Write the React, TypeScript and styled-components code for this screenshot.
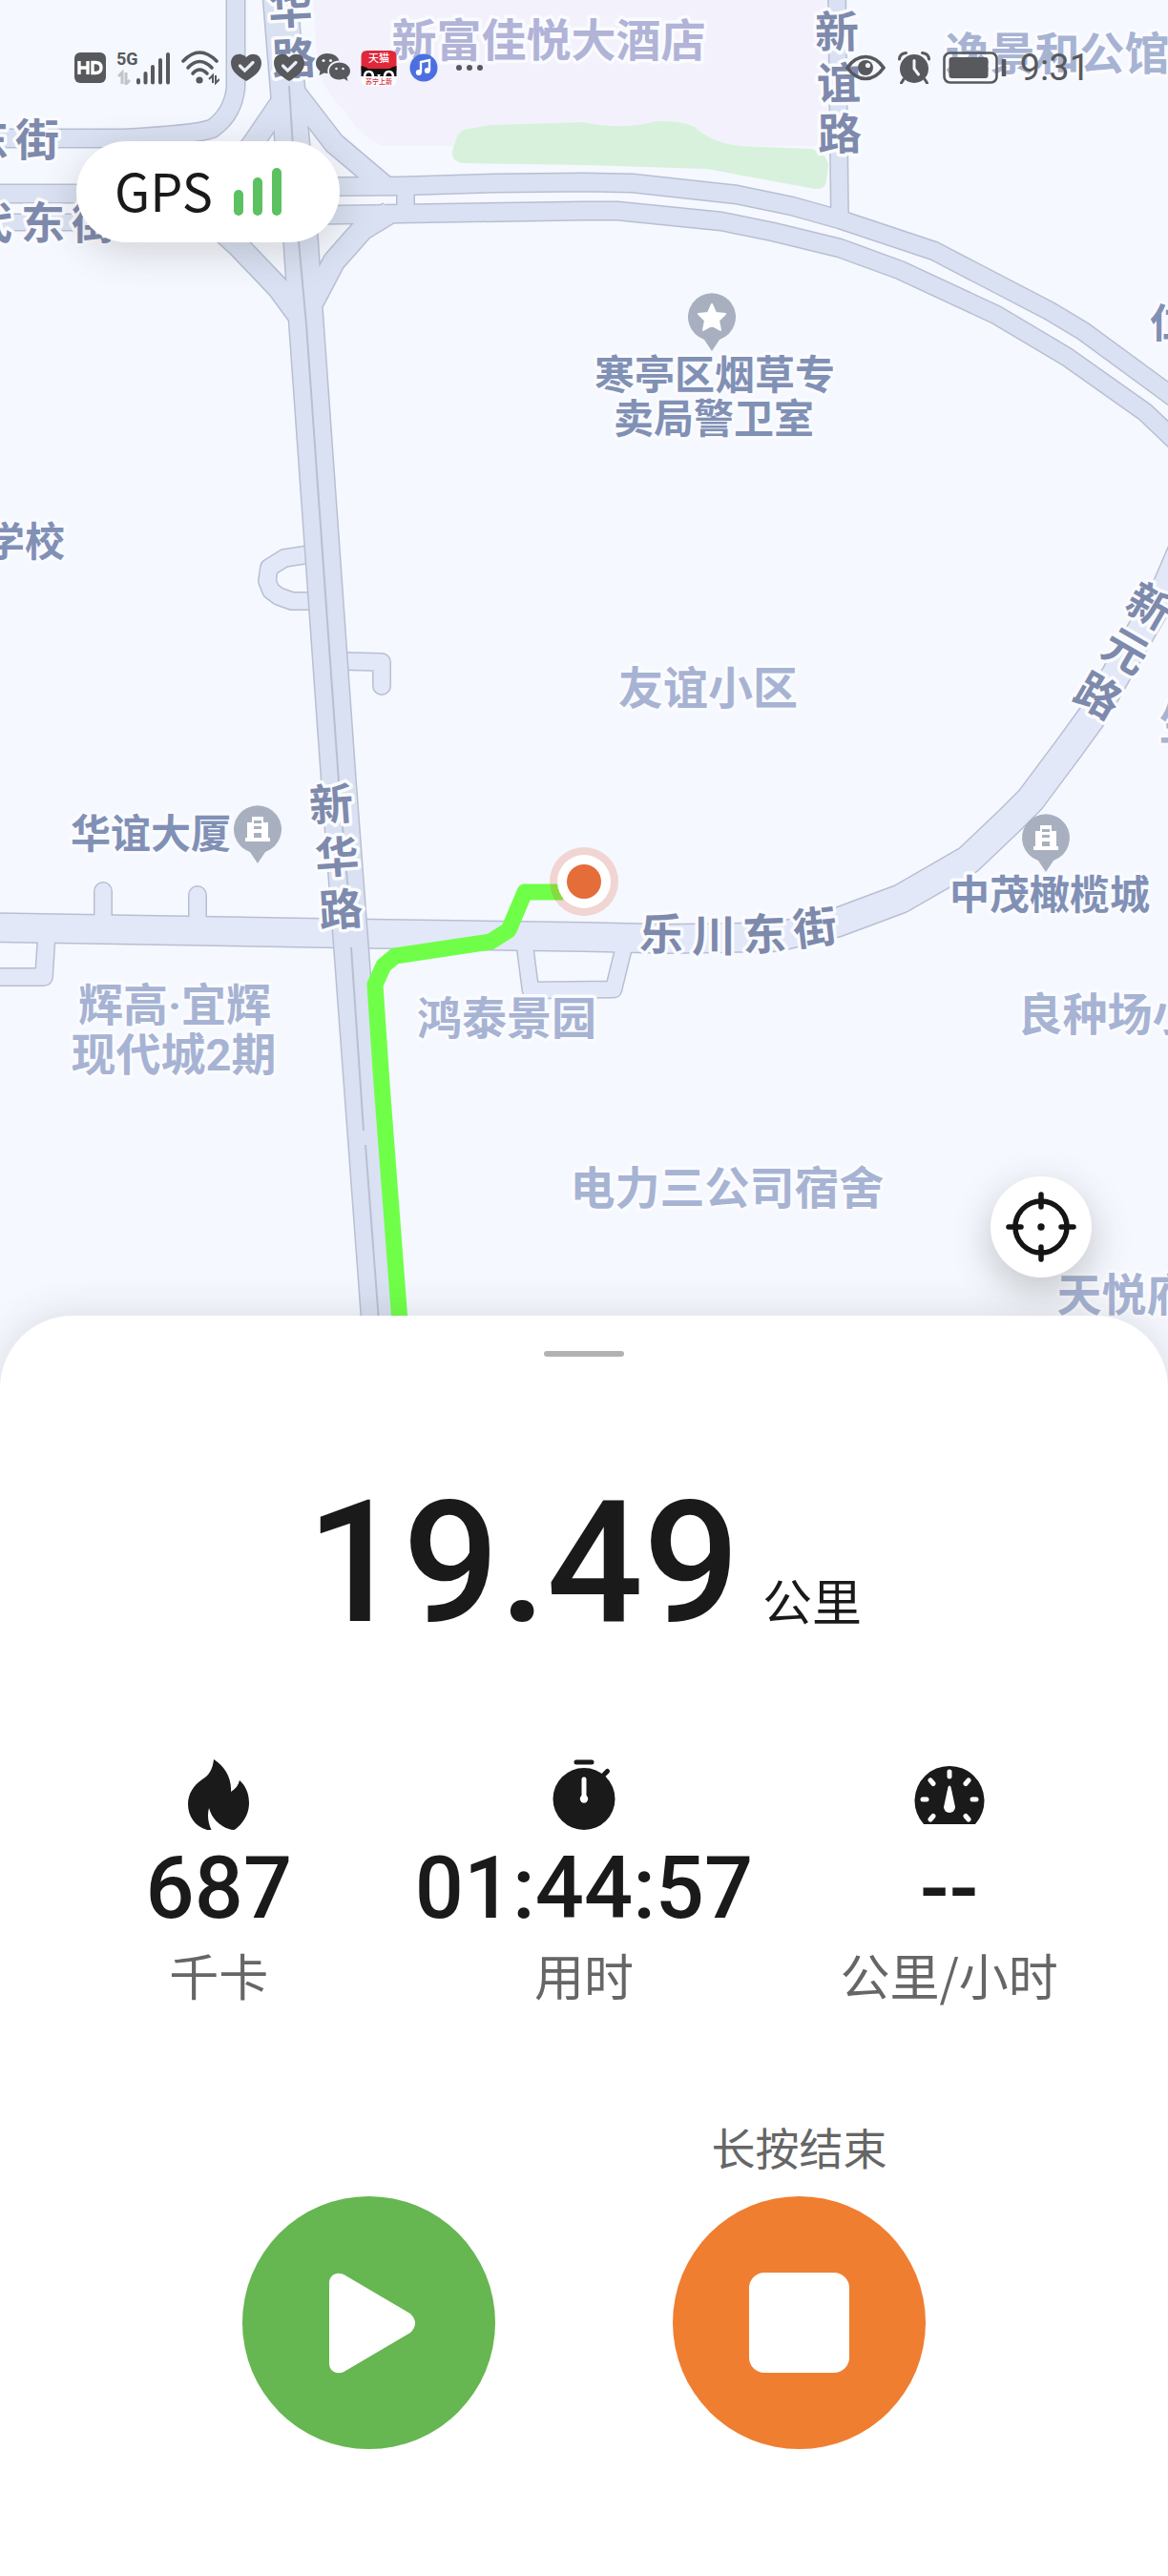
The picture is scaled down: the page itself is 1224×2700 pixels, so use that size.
import React from "react";
import styled, { createGlobalStyle } from "styled-components";

const GlobalStyle = createGlobalStyle`
  *, *::before, *::after { box-sizing: border-box; }
  body { margin: 0; background: #fff; }
  button { border: 0; padding: 0; cursor: pointer; font: inherit; }
`;

const cjk = `"Noto Sans CJK SC", "Noto Sans", sans-serif`;
const digits = `Roboto, "Noto Sans", sans-serif`;

const Screen = styled.main`
  min-height: 100vh;
  display: flex;
  flex-direction: column;
  font-family: ${cjk};
  color: #1a1a1a;
  overflow: hidden;
`;

const MapPane = styled.section`
  position: relative;
`;

const MapCanvas = styled.svg`
  display: block;
  width: 100%;
  height: 1460px;
  background: #f5f8fe;
  font-family: Roboto, ${cjk};
`;

const StatusBar = styled.header`
  position: absolute;
  top: 50px;
  left: 78px;
  right: 82px;
  height: 42px;
  display: flex;
  align-items: center;
  justify-content: space-between;
  color: #58595d;
`;

const StatusGroup = styled.div<{ $gap: number }>`
  display: flex;
  align-items: center;
  gap: ${(p) => p.$gap}px;
`;

const Clock = styled.time`
  font-family: Roboto, ${cjk};
  font-size: 38px;
  line-height: 42px;
`;

const GpsPill = styled.div`
  position: absolute;
  top: 148px;
  left: 80px;
  height: 106px;
  padding: 0 61px 0 40px;
  display: flex;
  align-items: center;
  gap: 22px;
  border-radius: 53px;
  background: #fff;
  box-shadow: 0 10px 40px rgba(60, 60, 60, 0.2);
  font-size: 54px;
  line-height: 60px;
`;

const GpsName = styled.span`
  padding-bottom: 4px;
`;

const LocateButton = styled.button`
  position: absolute;
  right: 80px;
  bottom: 121px;
  width: 106px;
  height: 106px;
  display: grid;
  place-items: center;
  border-radius: 50%;
  background: #fff;
  color: #151515;
  box-shadow: 0 14px 40px rgba(60, 60, 60, 0.28);
`;

const Sheet = styled.section`
  position: relative;
  flex: 1;
  margin-top: -81px;
  padding: 37px 38px 133px;
  display: flex;
  flex-direction: column;
  align-items: center;
  border-radius: 76px 76px 0 0;
  background: #fff;
  box-shadow: 0 0 40px rgba(60, 60, 60, 0.16);
`;

const Handle = styled.div`
  width: 84px;
  height: 6px;
  border-radius: 3px;
  background: #b2b2b2;
`;

const Distance = styled.p`
  margin: 128px 0 0;
  display: flex;
  align-items: baseline;
  gap: 24px;
  font-size: 52px;
  line-height: 60px;
`;

const DistanceValue = styled.strong`
  font-family: ${digits};
  font-size: 178px;
  font-weight: 500;
  line-height: 176px;
`;

const Stats = styled.dl`
  width: 100%;
  margin: 118px 0 0;
  display: grid;
  grid-template-columns: repeat(3, 1fr);
`;

const Stat = styled.div`
  display: flex;
  flex-direction: column;
  align-items: center;
`;

const StatValue = styled.dd`
  order: 1;
  margin: 18px 0 16px;
  font-family: ${digits};
  font-size: 90px;
  font-weight: 500;
  line-height: 88px;
`;

const StatLabel = styled.dt`
  order: 2;
  color: #666;
  font-size: 52px;
  line-height: 60px;
  white-space: nowrap;
`;

const Controls = styled.div`
  margin-top: 122px;
  display: flex;
  align-items: flex-end;
  justify-content: center;
  gap: 186px;
`;

const Control = styled.div`
  display: flex;
  flex-direction: column;
  align-items: center;
  gap: 26px;
`;

const Hint = styled.label`
  color: #666;
  font-size: 46px;
  line-height: 54px;
`;

const RoundButton = styled.button<{ $tone: string }>`
  width: 265px;
  height: 265px;
  display: grid;
  place-items: center;
  border-radius: 50%;
  background: ${(p) => p.$tone};
  color: #fff;
`;

const StopMark = styled.span`
  width: 105px;
  height: 105px;
  border-radius: 16px;
  background: currentColor;
`;

/* ---------- map ---------- */

type Road = { d: string; w: number; cap?: "round" | "butt" };

const MINOR = "#e2e8f8";
const MAJOR = "#d9e1f2";
const EDGE = "#b9bfd2";

const minorRoads: Road[] = [
  { d: "M324 581L298 585L282 595L280 609L284 619L292 625L306 630L328 630", w: 17 },
  { d: "M360 693L400 694L400 719", w: 17, cap: "round" },
  { d: "M108 975L108 934", w: 17, cap: "round" },
  { d: "M207 975L207 938", w: 17, cap: "round" },
  { d: "M49 978L46 1024L-10 1024", w: 17 },
  { d: "M549 984L556 1038L643 1037L656 984", w: 16 },
  {
    d: "M-10 972L340 978L612 982L700 984L815 982L877 967L944 942L1015 901L1058 860L1080 838L1121 783L1145 750L1185 680L1222 617L1240 575",
    w: 29,
  },
];

const majorRoads: Road[] = [
  { d: "M247 -10L247 92Q244 120 222 135Q205 141 130 145L-10 145", w: 18 },
  { d: "M877 -10L880 228", w: 17 },
  { d: "M-10 203L120 203L340 195", w: 18 },
  { d: "M-10 233L120 233L340 226", w: 16 },
  { d: "M305 92L264 152L230 195", w: 21 },
  { d: "M310 98L350 150L402 194", w: 21 },
  { d: "M215 226L250 258L292 302L314 332", w: 22 },
  { d: "M408 223L380 240L350 274L328 316", w: 22 },
  { d: "M425 190L425 224", w: 17 },
  { d: "M293 -10L302 100L315 250L321 340L355 820L368 993L397 1385", w: 35 },
  {
    d: "M300 196L420 195L520 192L612 191L663 192L772 204L830 216L880 230L979 263L1100 326L1135 347L1240 424",
    w: 18,
  },
  {
    d: "M300 226L420 224L612 221L647 221L756 232L810 243L880 260L943 283L1044 330L1118 374L1200 432L1240 470",
    w: 18,
  },
];

const Roads = ({ roads, fill }: { roads: Road[]; fill: string }) => (
  <g fill="none" strokeLinejoin="round">
    {roads.map((r) => (
      <path key={`edge${r.d}`} d={r.d} stroke={EDGE} strokeWidth={r.w + 3} strokeLinecap={r.cap} />
    ))}
    {roads.map((r) => (
      <path key={r.d} d={r.d} stroke={fill} strokeWidth={r.w} strokeLinecap={r.cap} />
    ))}
  </g>
);

const MapText = styled.text<{ $size: number; $fill: string }>`
  font-size: ${(p) => p.$size}px;
  font-weight: 700;
  fill: ${(p) => p.$fill};
  stroke: #fafbff;
  stroke-width: 7px;
  stroke-linejoin: round;
  paint-order: stroke;
`;

const AREA = "#a7b3d3";
const PLACE = "#8190b5";
const STREET = "#7e8aac";

const areaLabels: [string, number, number, string?][] = [
  ["新富佳悦大酒店", 575, 41, "#b1b3d7"],
  ["逸景和公馆", 1108, 55],
  ["友谊小区", 742, 720],
  ["辉高·宜辉", 183, 1052],
  ["现代城2期", 182, 1104],
  ["鸿泰景园", 531, 1066],
  ["良种场小区", 1184, 1062],
  ["电力三公司宿舍", 762, 1244],
  ["天悦府", 1178, 1356],
  ["生", 1238, 757],
];

const placeLabels: [string, number, number][] = [
  ["寒亭区烟草专", 749, 392],
  ["卖局警卫室", 748, 438],
  ["学校", 26, 567],
  ["华谊大厦", 158, 873],
  ["中茂橄榄城", 1100, 937],
  ["仁", 1226, 338],
];

const streetGlyphs: [string, number, number, number][] = [
  ["华", 304, 8, -3], ["路", 308, 61, -3],
  ["东", -14, 146, 0], ["街", 39, 146, 0],
  ["代", -10, 233, 0], ["东", 45, 233, 0], ["街", 98, 233, 0],
  ["新", 877, 33, -1], ["谊", 879, 87, -1], ["路", 880, 140, -1],
  ["新", 347, 843, -4], ["华", 353, 898, -4], ["路", 357, 953, -4],
  ["新", 1205, 635, 30], ["元", 1180, 682, 30], ["路", 1151, 729, 30],
  ["乐", 693, 979, 1], ["川", 748, 980, 0], ["东", 801, 979, -2], ["街", 854, 972, -7],
];

const Pin = ({ x, y, kind }: { x: number; y: number; kind: "star" | "building" }) => (
  <g transform={`translate(${x} ${y})`}>
    <path d="M0 35L-8 23A25 25 0 1 1 8 23Z" fill="#a8b0c0" />
    {kind === "star" ? (
      <path
        d="M0 -14L4 -5L14 -4L7 3L9 13L0 8L-9 13L-7 3L-14 -4L-4 -5Z"
        fill="#fff" stroke="#fff" strokeWidth="2" strokeLinejoin="round"
      />
    ) : (
      <path
        fillRule="evenodd" fill="#fff"
        d="M-6 -14H6V-8H11V8H13V12H-13V8H-11V-8H-6ZM-4 -10V-7H4V-10ZM-4 -4V-1H4V-4ZM-4 3V8H4V3Z"
      />
    )}
  </g>
);

const CityMap = () => (
  <MapCanvas viewBox="0 0 1224 1460" preserveAspectRatio="xMidYMin slice" role="img" aria-label="运动轨迹地图">
    <path d="M328 0L333 70Q340 97 360 115Q385 153 406 153H868V0Z" fill="#f3f2fc" />
    <path
      d="M484 171Q472 168 474 158L479 143Q482 137 490 135L515 131L612 128Q650 137 688 127Q715 126 728 133Q745 150 776 153L850 156Q868 162 868 174L866 190Q864 199 854 198L741 177L612 173Z"
      fill="#d8f1dc"
    />
    <Roads roads={minorRoads} fill={MINOR} />
    <Roads roads={majorRoads} fill={MAJOR} />
    <path
      d="M303 90L313 253L321 340L355 820L368 970M368 993L381 1185M383 1200L397 1385"
      fill="none" stroke={EDGE} strokeWidth="2"
    />
    {streetGlyphs.map(([t, x, y, r]) => (
      <MapText
        key={`${t}${x}${y}`} $size={46} $fill={STREET} textAnchor="middle"
        transform={`translate(${x} ${y}) rotate(${r})`} y={17}
      >
        {t}
      </MapText>
    ))}
    {areaLabels.map(([t, x, y, c]) => (
      <MapText key={t} $size={47} $fill={c ?? AREA} textAnchor="middle" x={x} y={y + 18}>
        {t}
      </MapText>
    ))}
    {placeLabels.map(([t, x, y]) => (
      <MapText key={t} $size={42} $fill={PLACE} textAnchor="middle" x={x} y={y + 16}>
        {t}
      </MapText>
    ))}
    <Pin x={746} y={333} kind="star" />
    <Pin x={270} y={870} kind="building" />
    <Pin x={1096} y={879} kind="building" />
    <path
      d="M590 935L550 935L533 975L514 987L414 1002L402 1012L393 1032L400 1136L419 1385"
      fill="none" stroke="#70ff48" strokeWidth="17" strokeLinejoin="round"
    />
    <circle cx="612" cy="924" r="36" fill="#dd4a22" fillOpacity="0.2" />
    <circle cx="612" cy="924" r="28" fill="#fff" />
    <circle cx="612" cy="924" r="18" fill="#e56d39" />
  </MapCanvas>
);

/* ---------- status icons ---------- */

const HdIcon = () => (
  <svg width="34" height="34" viewBox="0 0 34 34" aria-hidden="true">
    <rect y="1" width="33" height="32" rx="6" fill="currentColor" />
    <path d="M5 10V24M14 10V24M5 17H14M19 11.500V22.500H22Q28 22.500 28 17T22 11.500Z" fill="none" stroke="#fff" strokeWidth="3.400" />
  </svg>
);

const SignalText = styled.text`
  font: 700 18px Roboto, sans-serif;
  fill: currentColor;
`;

const SignalIcon = () => (
  <svg width="56" height="36" viewBox="0 0 56 36" aria-hidden="true">
    <SignalText x="-1" y="15">5G</SignalText>
    <path d="M1 27L5 23V35M9 23V35L13 31" fill="none" stroke="#c3c4c8" strokeWidth="3" />
    <path d="M22 33.500V31M29.500 33.500V24M37 33.500V17M45 33.500V10M53 33.500V4" stroke="currentColor" strokeWidth="4" strokeLinecap="round" />
  </svg>
);

const WifiIcon = () => (
  <svg width="40" height="36" viewBox="0 0 40 36" aria-hidden="true">
    <g fill="none" stroke="currentColor" strokeWidth="3.600" strokeLinecap="round">
      <path d="M2 11Q19 -7 37 11" />
      <path d="M7 18Q19 5 32 18" />
      <path d="M12 24Q19 16 27 24" />
    </g>
    <circle cx="19" cy="31" r="3.600" fill="currentColor" />
    <path d="M29 30L33 26V34M36 26V34L40 30" fill="none" stroke="currentColor" strokeWidth="2" />
  </svg>
);

const HeartIcon = () => (
  <svg width="34" height="30" viewBox="0 0 34 30" aria-hidden="true">
    <path
      fillRule="evenodd" fill="currentColor"
      d="M17 4C22 -2 33 0 33 10C33 19 24 25 17 29C10 25 1 19 1 10C1 0 12 -2 17 4Z"
    />
    <path d="M10.500 13L15.500 18L24 9.500" fill="none" stroke="#e8ecf6" strokeWidth="3.200" strokeLinecap="round" />
  </svg>
);

const WeChatIcon = () => (
  <svg width="36" height="30" viewBox="0 0 36 30" aria-hidden="true">
    <path d="M12 0C5 0 0 4.500 0 10.500C0 14 2 16.500 4.500 18.500L3.500 23L8.500 20.500L12.500 21C11 13 17 7.500 24.500 7.500C23 3 18.500 0 12 0Z" fill="currentColor" />
    <path d="M24.500 9.500C18.500 9.500 14 13.500 14 18.500C14 24 19 28 25 27.500C27 27.500 28 27 29.500 26.600L33.500 29L32.500 25C34.500 23.500 36 21.500 36 18.500C36 13.500 31 9.500 24.500 9.500Z" fill="currentColor" />
    <g fill="#eef1fa">
      <circle cx="8" cy="7.500" r="1.600" /><circle cx="15.500" cy="7.500" r="1.600" />
      <circle cx="21.500" cy="16" r="1.300" /><circle cx="28.500" cy="16" r="1.300" />
    </g>
  </svg>
);

const ShopText = styled.text<{ $fill: string; $size: number }>`
  font: 500 ${(p) => p.$size}px ${cjk};
  fill: ${(p) => p.$fill};
`;

const ShopIcon = () => (
  <svg width="38" height="38" viewBox="0 0 38 38" aria-hidden="true">
    <rect x="0.500" y="1" width="37" height="37" rx="6" fill="#fff" />
    <path d="M0.500 22V7Q0.500 1 6.500 1H31.500Q37.500 1 37.500 7V22Z" fill="#e0283a" />
    <path d="M0.500 17Q5 18 8 20H30Q33 18 37.500 17V28H0.500Z" fill="#111" />
    <path d="M4 29Q4 23 8.500 23T13 29M25 29Q25 23 29.500 23T34 29" fill="none" stroke="#fff" strokeWidth="2.600" />
    <path d="M17 26H21L19 29Z" fill="#fff" />
    <ShopText $fill="#fff" $size={11} x="8" y="13">天猫</ShopText>
    <ShopText $fill="#d5283a" $size={7} x="5" y="36">苏宁上新</ShopText>
  </svg>
);

const MusicIcon = () => (
  <svg width="32" height="32" viewBox="-2 -1 32 32" aria-hidden="true">
    <circle cx="15" cy="15" r="14.500" fill="#4c6fe0" />
    <path d="M12 20V9L21 7V18" fill="none" stroke="#fff" strokeWidth="2.400" />
    <circle cx="9.800" cy="20" r="3" fill="#fff" /><circle cx="18.800" cy="18" r="3" fill="#fff" />
  </svg>
);

const DotsIcon = () => (
  <svg width="36" height="8" viewBox="-8 0 36 8" aria-hidden="true">
    <g fill="currentColor"><circle cx="3" cy="4" r="3" /><circle cx="14" cy="4" r="3" /><circle cx="25" cy="4" r="3" /></g>
  </svg>
);

const EyeIcon = () => (
  <svg width="42" height="28" viewBox="0 0 42 28" aria-hidden="true">
    <path d="M2 14Q10 2.500 21 2.500T40 14Q32 25.500 21 25.500T2 14Z" fill="none" stroke="currentColor" strokeWidth="3.600" />
    <circle cx="21" cy="14" r="8" fill="currentColor" />
    <circle cx="23.500" cy="11.500" r="2.600" fill="#eef1fa" />
  </svg>
);

const AlarmIcon = () => (
  <svg width="34" height="34" viewBox="0 0 34 34" aria-hidden="true">
    <circle cx="17" cy="18" r="15" fill="currentColor" />
    <path d="M1.500 8Q2 2 8.500 1.500M32.500 8Q32 2 25.500 1.500M6 29L3.500 33M28 29L30.500 33" fill="none" stroke="currentColor" strokeWidth="3" strokeLinecap="round" />
    <path d="M17 9.500V18L21.500 24" fill="none" stroke="#f3f5fc" strokeWidth="3" strokeLinecap="round" />
  </svg>
);

const BatteryIcon = () => (
  <svg width="68" height="34" viewBox="0 0 68 34" aria-hidden="true">
    <rect x="1.500" y="1.500" width="55" height="31" rx="6" fill="none" stroke="currentColor" strokeWidth="2.600" />
    <rect x="6.500" y="6" width="41" height="22" rx="3" fill="currentColor" />
    <path d="M64 8V26" stroke="currentColor" strokeWidth="4.500" />
  </svg>
);

const GpsBars = () => (
  <svg width="50" height="50" viewBox="0 0 50 50" aria-hidden="true">
    <g fill="#5bc161">
      <rect y="23" width="10" height="27" rx="5" />
      <rect x="20" y="10" width="10" height="40" rx="5" />
      <rect x="40" width="10" height="50" rx="5" />
    </g>
  </svg>
);

const LocateIcon = () => (
  <svg width="74" height="74" viewBox="0 0 74 74" fill="none" stroke="currentColor" strokeWidth="5.500" strokeLinecap="round" aria-hidden="true">
    <circle cx="37" cy="37" r="27" />
    <path d="M37 3V16M37 58V71M3 37H16M58 37H71" />
    <circle cx="37" cy="37" r="3.700" fill="currentColor" stroke="none" />
  </svg>
);

const FlameIcon = () => (
  <svg width="66" height="74" viewBox="0 0 66 74" fill="#1a1a1a" aria-hidden="true">
    <path d="M28 0C39 7 47 19 46 34C51 31 54 27 55 22C62 28 65 37 65 46C65 57 59 67 51 73Q49 75 44 73C34 70 26 62 23 51C21 59 22 67 26 75C10 73 1 61 1 47C1 36 7 27 16 21C23 17 27 10 28 0Z" />
  </svg>
);

const StopwatchIcon = () => (
  <svg width="66" height="74" viewBox="0 0 66 74" aria-hidden="true">
    <circle cx="33" cy="41.500" r="32.500" fill="#1a1a1a" />
    <path d="M25 3H41M53 17L57.500 12.500" stroke="#1a1a1a" strokeWidth="5" strokeLinecap="round" />
    <path d="M33 21V40" stroke="#fff" strokeWidth="5" strokeLinecap="round" />
    <circle cx="33" cy="41.500" r="4.200" fill="#fff" />
  </svg>
);

const GaugeIcon = () => (
  <svg width="74" height="74" viewBox="0 0 74 74" aria-hidden="true">
    <path d="M10 68A36.500 36.500 0 1 1 64 68Z" fill="#1a1a1a" />
    <path
      d="M37 13V18M17 22L20 25.500M57 22L54 25.500M9 42H13M65 42H61M17 63L20 59.500M57 63L54 59.500"
      stroke="#fff" strokeWidth="5" strokeLinecap="round"
    />
    <path d="M35.500 29Q37 26 38.500 29L43 50A6 6 0 1 1 31 50Z" fill="#fff" />
  </svg>
);

const PlayIcon = () => (
  <svg width="98" height="106" viewBox="-6 0 98 106" aria-hidden="true">
    <path d="M1 11C1 2 10 -2 18 3L86 43Q96 53 86 63L18 103C10 108 1 104 1 95Z" fill="currentColor" />
  </svg>
);

const stats = [
  { icon: <FlameIcon />, value: "687", label: "千卡" },
  { icon: <StopwatchIcon />, value: "01:44:57", label: "用时" },
  { icon: <GaugeIcon />, value: "--", label: "公里/小时" },
];

export default function App() {
  return (
    <Screen>
      <GlobalStyle />
      <MapPane>
        <CityMap />
        <StatusBar>
          <StatusGroup $gap={11}>
            <HdIcon /><SignalIcon /><WifiIcon /><HeartIcon /><HeartIcon />
            <WeChatIcon /><ShopIcon /><MusicIcon /><DotsIcon />
          </StatusGroup>
          <StatusGroup $gap={13}>
            <EyeIcon /><AlarmIcon /><BatteryIcon />
            <Clock>9:31</Clock>
          </StatusGroup>
        </StatusBar>
        <GpsPill><GpsName>GPS</GpsName><GpsBars /></GpsPill>
        <LocateButton type="button" aria-label="定位"><LocateIcon /></LocateButton>
      </MapPane>
      <Sheet>
        <Handle />
        <Distance>
          <DistanceValue>19.49</DistanceValue>
          <span>公里</span>
        </Distance>
        <Stats>
          {stats.map((s) => (
            <Stat key={s.label}>
              {s.icon}
              <StatLabel>{s.label}</StatLabel>
              <StatValue>{s.value}</StatValue>
            </Stat>
          ))}
        </Stats>
        <Controls>
          <Control>
            <RoundButton type="button" $tone="#66b651" aria-label="继续"><PlayIcon /></RoundButton>
          </Control>
          <Control>
            <Hint htmlFor="finish">长按结束</Hint>
            <RoundButton id="finish" type="button" $tone="#ef7e31"><StopMark /></RoundButton>
          </Control>
        </Controls>
      </Sheet>
    </Screen>
  );
}
